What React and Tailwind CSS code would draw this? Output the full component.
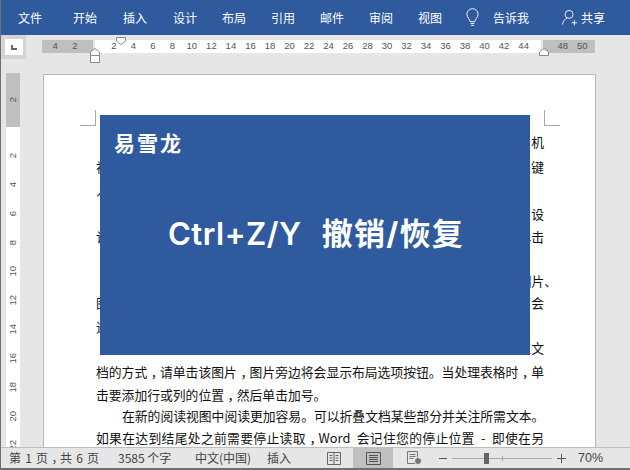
import React from "react";

const cjk = { fontFamily: '"Noto Sans CJK SC", "Liberation Sans", sans-serif' };

const tabs = [
   ["文件", "ml-[17px]"],
   ["开始", "ml-[31px]"],
   ["插入", "ml-[26px]"],
   ["设计", "ml-[26px]"],
   ["布局", "ml-[25px]"],
   ["引用", "ml-[25px]"],
   ["邮件", "ml-[25px]"],
   ["审阅", "ml-[25px]"],
   ["视图", "ml-[25px]"],
];

const hNums = ["4", "2", "", "2", "4", "6", "8", "10", "12", "14", "16", "18", "20", "22", "24", "26", "28", "30", "32", "34", "36", "38", "40", "42", "44", "", "48", "50"];
const vNums = ["2", "4", "6", "8", "10", "12", "14", "16", "18", "20", "22"];

// full lines are stretched to the margin, short ones stay left
const lines = [
   { t: "视频提供了功能强大的方法帮助您证明您的观点。当您单击联机", h: "h-[25px] leading-[25px]", indent: true, full: true },
   { t: "视频时，可以在想要添加的视频的嵌入代码中进行粘贴。您也可以键", h: "h-[24px] leading-[25px]", full: true },
   { t: "入一个关键字以联机搜索最适合您的文档的视频。", h: "h-[24px] leading-[24px]" },
   { t: "为使您的文档具有专业外观，Word 提供了页眉、页脚、封面和文本框设", h: "h-[23px] leading-[24px]", indent: true, full: true },
   { t: "计，这些设计可互为补充。例如，您可以添加匹配的封面、页眉和提要栏。单击", h: "h-[23px] leading-[23px]", full: true },
   { t: "“插入”，然后从不同库中选择所需元素。", h: "h-[22px] leading-[23px]" },
   { t: "主题和样式也有助于文档保持协调。当您单击设计并选择新的主题时，图片、", h: "h-[22px] leading-[22px]", indent: true, full: true },
   { t: "图表或 SmartArt 图形将会更改以匹配新的主题。当应用样式时，您的标题会", h: "h-[23px] leading-[22px]", full: true },
   { t: "进行更改以匹配新的主题。", h: "h-[22px] leading-[23px]" },
   { t: "使用在需要位置出现的新按钮在 Word 中保存时间。若要更改图片适应文", h: "h-[23px] leading-[22px]", indent: true, full: true },
   { t: "档的方式，请单击该图片，图片旁边将会显示布局选项按钮。当处理表格时，单", h: "h-[23px] leading-[23px]", full: true },
   { t: "击要添加行或列的位置，然后单击加号。", h: "h-[22px] leading-[23px]" },
   { t: "在新的阅读视图中阅读更加容易。可以折叠文档某些部分并关注所需文本。", h: "h-[22px] leading-[22px]", indent: true, full: true },
   { t: "如果在达到结尾处之前需要停止读取，Word  会记住您的停止位置  -  即使在另", h: "h-[23px] leading-[22px]", full: true },
];

// the reference sets its commas in the middle of the cell
const Commas = ({ text }) =>
   text.split("，").map((part, i) => (
      <React.Fragment key={i}>
         {i > 0 && <span className="inline-block w-[1em] pl-[0.28em]">，</span>}
         {part}
      </React.Fragment>
   ));

const Marker = ({ className, box }) => (
   <svg className={`absolute ${className}`} width="10" height={box ? 15 : 8} viewBox={box ? "0 0 10 15" : "0 0 10 8"} fill="#fff" stroke="#8a8a8a">
      <path d="M0.5 7.5V4L5 0.5 9.5 4v3.5z" />
      {box && <rect x="0.5" y="7.5" width="9" height="7" />}
   </svg>
);

const App = () => {
   return (
      <div className="relative w-[630px] h-[470px] flex flex-col overflow-hidden bg-[#e6e6e6] border-l border-[#6f6f6f]" style={cjk}>
         {/* Title bar */}
         <div className="h-[35px] shrink-0 flex items-center bg-[#2f5a9e] text-white text-[12px]">
            {tabs.map(([name, ml]) => (
               <span key={name} className={`${ml} w-[24px] whitespace-nowrap`}>{name}</span>
            ))}
            <svg className="ml-[24px]" width="13" height="19" viewBox="0 0 14 20" fill="none" stroke="#fff" strokeWidth="1">
               <path d="M4.5 14.5c0-2.5-3.5-4-3.5-8a6 6 0 0 1 12 0c0 4-3.500 5.500-3.500 8z" />
               <path d="M5 16.500h4M5.500 18.500h3" />
            </svg>
            <span className="ml-[14px] w-[37px] whitespace-nowrap">告诉我</span>
            <svg className="ml-[32px]" width="15" height="17" viewBox="0 0 17 18" fill="none" stroke="#fff" strokeWidth="1">
               <circle cx="8" cy="5.500" r="4.500" />
               <path d="M0.500 17c0.500-3.500 2.500-6 5-7M11 15h6M14 12v6" />
            </svg>
            <span className="ml-[4px] whitespace-nowrap">共享</span>
         </div>

         {/* Ruler row */}
         <div className="h-[38px] shrink-0 relative">
            <div className="absolute left-[0px] top-0 w-[25px] h-[24px] bg-[#d4d4d4] flex items-center justify-center">
               <div className="w-[18px] h-[16px] bg-white flex items-center justify-center">
                  <div className="w-[6px] h-[5px] border-l-2 border-b-2 border-[#666]"></div>
               </div>
            </div>
            <div className="ml-[41px] mt-[5px] w-[553px] h-[13px] flex">
               <div className="w-[51px] bg-[#bfbfbf]"></div>
               <div className="ml-[2px] w-[446px] bg-white"></div>
               <div className="ml-[2px] w-[52px] bg-[#bfbfbf]"></div>
            </div>
            <div className="absolute left-[44.500px] top-[5px] h-[13px] flex items-center text-[9.500px] text-[#555]" style={{ fontFamily: '"Liberation Sans", sans-serif' }}>
               {hNums.map((n, i) => (
                  <span key={i} className="w-[19.530px] text-center">{n}</span>
               ))}
            </div>
            <Marker className="left-[115px] top-[2px] rotate-180" />
            <Marker className="left-[89px] top-[13px]" box />
            <Marker className="left-[538px] top-[13px]" />
         </div>

         {/* Document area */}
         <div className="flex-1 min-h-0 flex overflow-hidden">
            <div className="ml-[5px] w-[14px] shrink-0 flex flex-col bg-white text-[9.500px] text-[#555]" style={{ fontFamily: '"Liberation Sans", sans-serif' }}>
               <div className="h-[54px] mb-[1px] shrink-0 bg-[#bfbfbf] flex items-center justify-center">
                  <span className="[writing-mode:vertical-rl] rotate-180">2</span>
               </div>
               <div className="pt-[13px] flex flex-col">
                  {vNums.map((n) => (
                     <div key={n} className="h-[29px] shrink-0 flex items-center justify-center">
                        <span className="[writing-mode:vertical-rl] rotate-180">{n}</span>
                     </div>
                  ))}
               </div>
            </div>
            <div className="ml-[23px] mt-[1px] w-[553px] shrink-0 bg-white border border-[#b9b9b9] pt-[54px] pl-[52px] h-[500px]">
               <div className="w-[448px] text-[12.800px] text-[#111]">
                  {lines.map((l, i) => (
                     <div
                        key={i}
                        className={`${l.h} whitespace-pre ${l.indent ? "pl-[26px]" : ""} ${l.full ? "text-justify [text-align-last:justify]" : ""}`}
                     >
                        <Commas text={l.t} />
                     </div>
                  ))}
               </div>
            </div>
         </div>

         {/* Crop marks */}
         <div className="absolute left-[79px] top-[110px] w-[16px] h-[16px] border-r border-b border-[#a8a8a8]"></div>
         <div className="absolute left-[543px] top-[110px] w-[16px] h-[16px] border-l border-b border-[#a8a8a8]"></div>

         {/* Banner over the page */}
         <div className="absolute left-[99px] top-[115px] w-[430px] h-[240px] bg-[#2f5a9e] text-white font-bold">
            <div className="absolute left-[14px] top-[14px] text-[21px] leading-[26px] tracking-[2px] whitespace-nowrap">易雪龙</div>
            <div className="h-full flex items-center pl-[68px] pb-[2px]">
               <span
                  className="text-[31px] leading-[40px] font-semibold whitespace-pre"
                  style={{ fontFamily: '"Inter", "Noto Sans CJK SC", sans-serif' }}
               >
                  <span className="tracking-[0.5px]">Ctrl+Z/Y</span>
                  <span className="ml-[20px] tracking-[1.300px] font-bold">撤销/恢复</span>
               </span>
            </div>
         </div>

         {/* Status bar */}
         <div className="absolute left-0 right-0 bottom-0 h-[23px] bg-[#e6e6e6] border-t border-[#bdbdbd] border-b-2 border-b-[#6f6f6f] flex items-center text-[12px] text-[#444]">
            <span className="ml-[8px] w-[100px] whitespace-pre [word-spacing:1.500px]"><Commas text="第 1 页，共 6 页" /></span>
            <span className="ml-[9px] w-[60px] whitespace-nowrap">3585 个字</span>
            <span className="ml-[17px] w-[60px] whitespace-nowrap">中文(中国)</span>
            <span className="ml-[12px] w-[30px] whitespace-nowrap">插入</span>
            <svg className="ml-[30px]" width="14" height="13" viewBox="0 0 14 13" fill="none" stroke="#666">
               <path d="M0.500 0.500h13v12h-13zM7 0.500v12M2.500 3.500h3M2.500 6h3M2.500 8.500h3M8.500 3.500h3M8.500 6h3M8.500 8.500h3" />
            </svg>
            <div className="ml-[12px] w-[40px] h-full bg-[#c0c0c0] flex items-center justify-center">
               <svg width="15" height="13" viewBox="0 0 15 13" fill="none" stroke="#555">
                  <path d="M0.500 0.500h14v12h-14zM3 3.500h9M3 5.500h9M3 7.500h9M3 9.500h9" />
               </svg>
            </div>
            <svg className="ml-[14px]" width="15" height="14" viewBox="0 0 15 14" fill="none" stroke="#777">
               <path d="M0.500 0.500h10v12h-10zM2.500 3.500h6M2.500 5.500h6M2.500 7.500h4" />
               <circle cx="11" cy="10" r="3.500" fill="#777" stroke="#e6e6e6" />
            </svg>
            <span className="ml-[17px] w-[8px] h-px bg-[#555]"></span>
            <div className="relative ml-[5px] w-[100px] h-px bg-[#aaa]">
               <div className="absolute left-[50px] top-[-2px] w-px h-[5px] bg-[#aaa]"></div>
               <div className="absolute left-[32px] top-[-5px] w-[5px] h-[11px] bg-[#666]"></div>
            </div>
            <svg className="ml-[5px]" width="9" height="9" viewBox="0 0 9 9" stroke="#555"><path d="M0 4.500h9M4.500 0v9" /></svg>
            <span className="ml-[12px] text-[12.500px] whitespace-nowrap" style={{ fontFamily: '"Liberation Sans", sans-serif' }}>70%</span>
         </div>
      </div>
   );
};

export default App;
